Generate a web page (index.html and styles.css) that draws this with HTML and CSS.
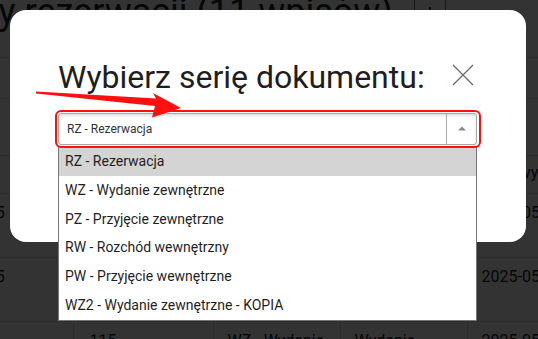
FILE: index.html
```html
<!DOCTYPE html>
<html lang="pl">
<head>
  <meta charset="UTF-8">
  <meta name="viewport" content="width=device-width, initial-scale=1">
  <title>Wybierz serię dokumentu</title>
  <link rel="stylesheet" href="styles.css">
</head>
<body>

  <!-- Page behind the dialog -->
  <div class="page">
    <div class="page-head">
      <h1>Dokumenty rezerwacji (11 wpisów)</h1>
      <button class="head-btn" type="button">+</button>
    </div>

    <table class="list">
      <tr class="row-filter"><td></td><td></td><td></td><td></td><td></td></tr>
      <tr class="row-tools"><td></td><td></td><td></td><td></td><td></td></tr>
      <tr class="row-head">
        <th></th><th>Nr</th><th>Seria</th><th>Typ</th><th>Data wyst.</th>
      </tr>
      <tr class="row-item">
        <td>2025-05-25</td><td>117</td><td>RZ - Rezerwacja</td><td>Rezerwacja</td><td>2025-05-22</td>
      </tr>
      <tr class="row-item">
        <td>2025-05-15</td><td>116</td><td>WZ - Wydanie zewnętrzne</td><td>Wydanie</td><td>2025-05-15</td>
      </tr>
      <tr class="row-item">
        <td></td><td>115</td><td>WZ - Wydanie zewnętrzne</td><td>Wydanie</td><td>2025-05-14</td>
      </tr>
    </table>
  </div>

  <div class="backdrop"></div>

  <!-- Dialog -->
  <div class="modal">
    <div class="modal-head">
      <h2>Wybierz serię dokumentu:</h2>
      <button class="close-btn" type="button" aria-label="Zamknij">
        <svg width="22" height="22" viewBox="0 0 22 22">
          <path d="M1 1 L21 21 M21 1 L1 21" stroke="#6b6b6b" stroke-width="1.3" fill="none"/>
        </svg>
      </button>
    </div>

    <div class="select-box">
      <span class="select-value">RZ - Rezerwacja</span>
      <span class="select-arrow">
        <svg width="10" height="6" viewBox="0 0 10 6"><path d="M1 5.5 L5 1.5 L9 5.5 Z" fill="#8a8a8a"/></svg>
      </span>
    </div>
  </div>

  <!-- Open dropdown -->
  <ul class="options">
    <li class="selected">RZ - Rezerwacja</li>
    <li>WZ - Wydanie zewnętrzne</li>
    <li>PZ - Przyjęcie zewnętrzne</li>
    <li>RW - Rozchód wewnętrzny</li>
    <li>PW - Przyjęcie wewnętrzne</li>
    <li>WZ2 - Wydanie zewnętrzne - KOPIA</li>
  </ul>

  <!-- Red annotation -->
  <div class="mark-box"></div>
  <svg class="mark-arrow" width="538" height="339" viewBox="0 0 538 339">
    <polygon points="36,91.5 156,98.5 153,93 181,108 152,117.5 155,106 36,93.5" fill="#ff1010"/>
  </svg>

</body>
</html>
```

FILE: styles.css
```css
* {
  box-sizing: border-box;
}

body {
  margin: 0;
  font-family: 'Roboto', Arial, sans-serif;
  background-color: #fff;
  color: #212529;
  overflow: hidden;
}

/* background page */
.page {
  margin-top: -12px;
}

.page-head {
  display: flex;
  align-items: center;
  gap: 21px;
  height: 48px;
  margin-left: -166px;
  white-space: nowrap;
}

.page-head h1 {
  margin: 0;
  font-size: 36px;
  font-weight: 400;
  line-height: 48px;
}

.head-btn {
  flex: none;
  width: 32px;
  height: 38px;
  border: 1px solid #6c757d;
  border-radius: 6px;
  background: #fff;
  font-size: 20px;
}

.list {
  margin-top: 21px;
  margin-left: -110px;
  border-collapse: collapse;
  table-layout: fixed;
  width: 760px;
  font-size: 16px;
}

.list td,
.list th {
  border-top: 1px solid #dee2e6;
  border-left: 1px solid #dee2e6;
  padding: 7px 14px 8px;
  vertical-align: top;
  text-align: left;
  font-weight: 400;
  line-height: 24px;
  white-space: nowrap;
  overflow: hidden;
}

.list td:first-child,
.list th:first-child {
  width: 183px;
  border-left: none;
  padding-left: 34px;
}

.list td:nth-child(2), .list th:nth-child(2) { width: 140px; padding-left: 16px; }
.list td:nth-child(3), .list th:nth-child(3) { width: 127px; white-space: normal; }
.list td:nth-child(4), .list th:nth-child(4) { width: 127px; }

.row-filter td { height: 41px; }
.row-tools td { height: 57px; }
.row-head th { height: 34px; padding-top: 5px; }
.row-item td { height: 57px; }

.backdrop {
  position: fixed;
  inset: 0;
  background-color: rgba(0, 0, 0, 0.8);
}

/* dialog */
.modal {
  position: fixed;
  left: 10px;
  top: 10px;
  width: 516px;
  height: 232px;
  background-color: #fff;
  border-radius: 16px;
  padding: 48px 49px 0 48px;
}

.modal-head {
  display: flex;
  align-items: flex-start;
  justify-content: space-between;
}

.modal-head h2 {
  margin: 0;
  font-size: 32px;
  font-weight: 400;
  line-height: 38px;
  color: #1e1e1e;
}

.close-btn {
  margin: 6px 3px 0 0;
  padding: 0;
  border: none;
  background: none;
  line-height: 0;
}

.select-box {
  display: flex;
  align-items: stretch;
  height: 32px;
  margin-top: 17px;
  border: 1px solid #a8a8a8;
  border-radius: 3px;
  box-shadow: inset 0 2px 3px rgba(0, 0, 0, 0.12);
}

.select-value {
  flex: 1;
  padding-left: 8px;
  font-size: 12px;
  line-height: 31px;
  color: #333;
}

.select-arrow {
  width: 30px;
  display: flex;
  align-items: center;
  justify-content: center;
  border-left: 1px solid #aaa;
  padding-bottom: 3px;
}

/* open list */
.options {
  position: fixed;
  left: 58px;
  top: 147px;
  width: 419px;
  margin: 0;
  padding: 0;
  list-style: none;
  background-color: #fff;
  border: 1px solid #767676;
  border-top: none;
}

.options li {
  height: 28.8px;
  padding-left: 6px;
  font-size: 14px;
  line-height: 28px;
  color: #1f1f1f;
}

.options li.selected {
  background-color: #d4d4d4;
}

/* annotation */
.mark-box {
  position: fixed;
  left: 55px;
  top: 110px;
  width: 426px;
  height: 38px;
  border: 2px solid #ff1010;
  border-radius: 6px;
}

.mark-arrow {
  position: fixed;
  left: 0;
  top: 0;
  pointer-events: none;
}
```
